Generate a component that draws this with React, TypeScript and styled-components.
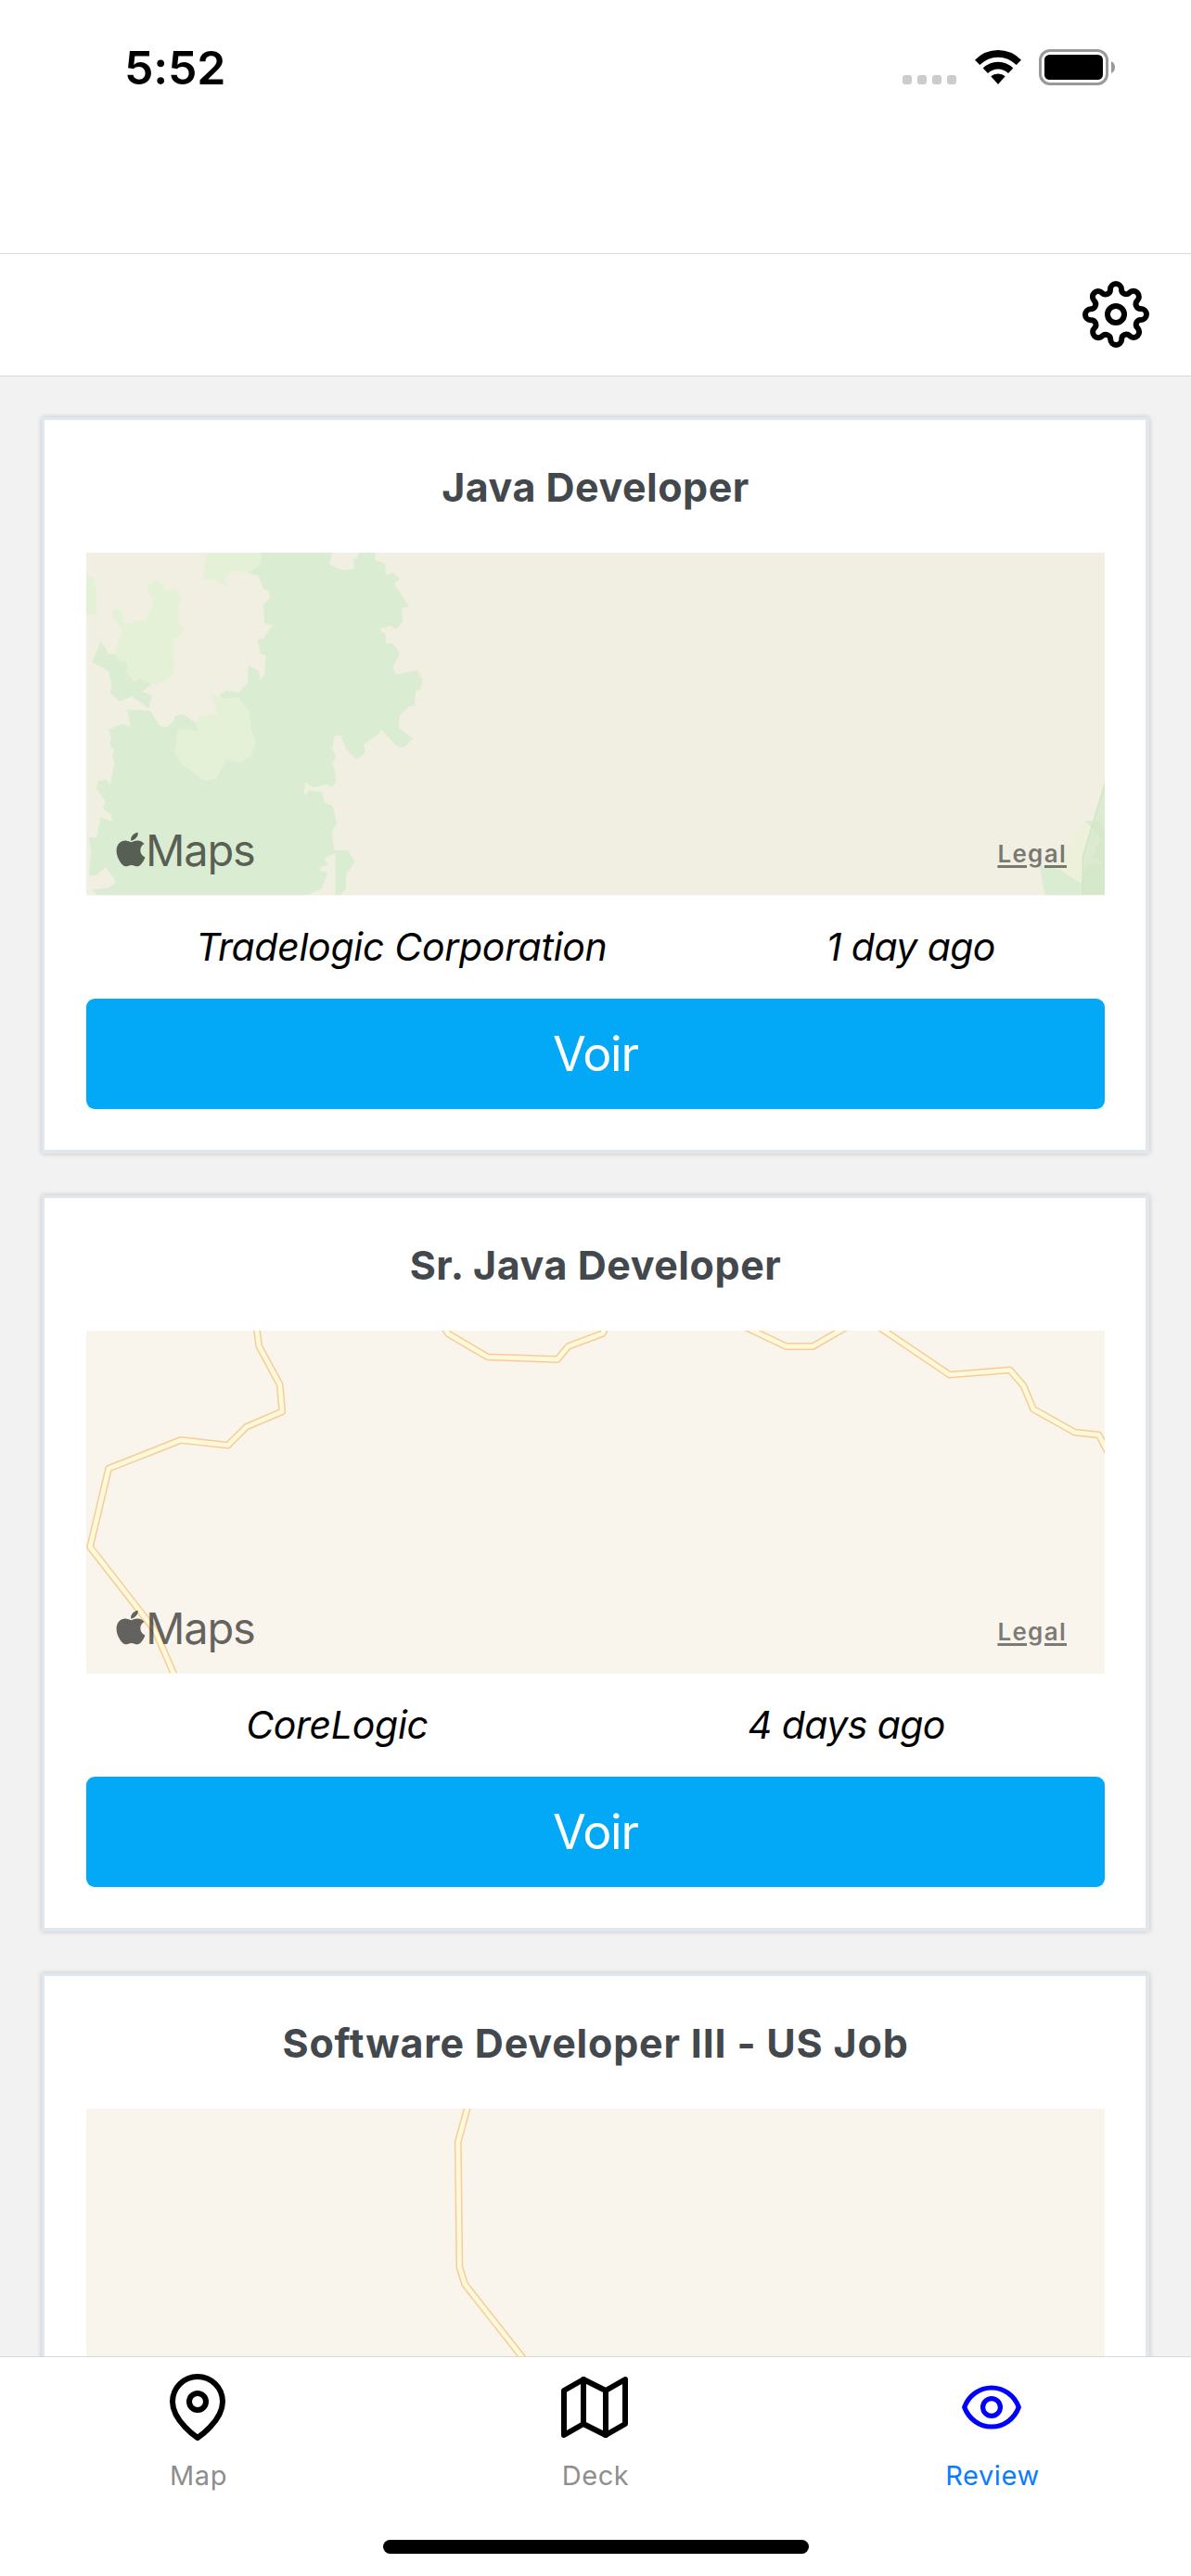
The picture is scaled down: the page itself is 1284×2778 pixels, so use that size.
import React from 'react';
import styled, { createGlobalStyle } from 'styled-components';
import { FiMap, FiMapPin, FiSettings } from 'react-icons/fi';
import { FaApple } from 'react-icons/fa';

const GlobalStyle = createGlobalStyle`
  * { box-sizing: border-box; }
  body {
    margin: 0;
    background: #fff;
    font-family: Inter, "Liberation Sans", sans-serif;
    -webkit-font-smoothing: antialiased;
  }
`;

const Screen = styled.div`
  width: 1284px;
  height: 2778px;
  display: flex;
  flex-direction: column;
  overflow: hidden;
  background: #fff;
`;

const StatusBar = styled.header`
  flex: none;
  height: 273px;
  display: flex;
  justify-content: space-between;
  align-items: flex-start;
  padding: 43px 82px 0 134px;
`;

const Time = styled.span`
  font-size: 50px;
  line-height: 60px;
  font-weight: 600;
  letter-spacing: -0.2px;
`;

const StatusIcons = styled.div`
  display: flex;
  padding-top: 10px;
`;

const Dots = styled.div`
  display: flex;
  gap: 6px;
  margin: 28px 20px 0 0;
`;

const Dot = styled.i`
  width: 10px;
  height: 10px;
  border-radius: 3px;
  background: #ccc;
`;

const Wifi = styled.svg`
  width: 50px;
  height: 38px;
  margin: 1px 19px 0 0;
`;

const Battery = styled.svg`
  width: 82px;
  height: 39px;
`;

const Header = styled.div`
  flex: none;
  height: 133px;
  border-top: 1px solid #d9d9db;
  border-bottom: 1px solid #d9d9db;
  display: flex;
  justify-content: flex-end;
  padding: 29px 45px 0 0;
`;

const List = styled.main`
  flex: 1;
  min-height: 0;
  overflow: hidden;
  display: flex;
  flex-direction: column;
  gap: 45px;
  padding: 44px 45px 0;
  background: #f2f2f2;
`;

const Card = styled.article`
  flex: none;
  height: 794px;
  display: flex;
  flex-direction: column;
  padding: 42px 44px 0 45px;
  background: #fff;
  border: solid #e1e8ed;
  border-width: 3px 4px 4px 3px;
  box-shadow: 0 0 6px rgba(0, 0, 0, 0.2);
`;

const Title = styled.h2<{ $spacing: number }>`
  margin: 0 0 41px;
  font-size: 43px;
  line-height: 60px;
  font-weight: 700;
  text-align: center;
  color: #43484d;
  letter-spacing: ${(p) => p.$spacing}px;
`;

const MapFrame = styled.div<{ $bg: string; $edge: string }>`
  position: relative;
  flex: none;
  height: 370px;
  background: ${(p) => p.$bg};
  border-bottom: 1px solid ${(p) => p.$edge};
`;

const MapArt = styled.svg`
  display: block;
  width: 1098px;
  height: 369px;
`;

const MapsBrand = styled.div`
  position: absolute;
  left: 32px;
  top: 296px;
  display: flex;
  align-items: flex-start;
  color: rgba(0, 0, 0, 0.6);
  font-size: 47px;
  line-height: 50px;
  letter-spacing: -1.2px;

  svg {
    width: 32px;
    height: 42px;
    margin: 3px 0 0 0;
  }
`;

const Legal = styled.a`
  position: absolute;
  right: 41px;
  top: 310px;
  font-size: 26px;
  line-height: 30px;
  font-weight: 600;
  letter-spacing: 1.3px;
  color: rgba(0, 0, 0, 0.5);
  text-decoration: underline;
  text-decoration-thickness: 3px;
  text-underline-offset: 3px;
`;

const Details = styled.div`
  flex: none;
  height: 111px;
  display: flex;
  justify-content: space-around;
  font-size: 41px;
  line-height: 111px;
  font-style: italic;
`;

const Company = styled.span`
  letter-spacing: -0.3px;
`;

const Age = styled.span`
  letter-spacing: -0.6px;
`;

const ViewButton = styled.button`
  flex: none;
  height: 119px;
  border: 0;
  padding: 0;
  border-radius: 9px;
  background: #03a9f6;
  color: #fff;
  font: 400 52px/119px Inter, sans-serif;
  letter-spacing: -1.2px;
`;

const TabBar = styled.nav`
  flex: none;
  height: 237px;
  border-top: 1px solid #d8d8d8;
  display: flex;
  flex-direction: column;
  align-items: center;
  background: #fff;
`;

const Tabs = styled.div`
  width: 100%;
  height: 197px;
  display: flex;
`;

const Tab = styled.div<{ $color: string }>`
  flex: 1;
  display: flex;
  flex-direction: column;
  align-items: center;
  padding: 18px 0 0;
  gap: 18px;
  color: ${(p) => p.$color};
  font-size: 29px;
  line-height: 40px;
  letter-spacing: 0.6px;

  svg {
    margin-right: 2px;
  }
`;

const HomeIndicator = styled.div`
  width: 459px;
  height: 15px;
  border-radius: 8px;
  background: #000;
`;

function EyeIcon() {
  return (
    <svg width="72" height="72" viewBox="-36 -36 72 72" fill="none" stroke="#0000ff" strokeWidth="5.2" strokeLinejoin="round">
      <path d="M-29.3 0C-24.5-12.8-13-21 0-21S24.5-12.8 29.3 0C24.5 12.8 13 21 0 21S-24.5 12.8-29.3 0Z" />
      <circle r="9.4" />
    </svg>
  );
}

function ForestMap() {
  return (
    <MapArt viewBox="0 0 1098 369">
      <g transform="translate(-93 -176) scale(.38265 .35714)">
        <path
          fill="#daecd1"
          d="M736 490H936L929 528L966 546L997 543V515L1010 504V490H1058L1056 514L1086 527V561L1108 554L1127 572L1110 587L1154 656L1132 661L1135 702L1114 725L1102 713L1069 723L1088 742L1087 767H1107L1127 796L1106 839L1116 860L1175 848L1191 877L1185 906L1171 910L1168 954L1152 957L1125 987V1023L1163 1054L1140 1080H1121L1074 1027L1066 1042L1026 1069L1028 1098L1005 1118L976 1088L960 1045H942L936 1085L946 1107L936 1132L944 1150L946 1187L934 1202L922 1192L882 1202L860 1186L856 1228L869 1211L908 1215L914 1246L937 1258L949 1310L936 1333L941 1391L982 1392L1000 1427L975 1464V1507L960 1526H945V1401L912 1416L924 1436L901 1443V1453L924 1459L906 1507L868 1526H274L260 1511L307 1504L327 1487L298 1441L272 1467H251L256 1396L250 1354L273 1352L283 1291L316 1305L313 1285L289 1266L297 1243L271 1205L277 1181L299 1178L310 1194L323 1123L316 1106L322 1090L310 1074L313 1047L305 1026L346 1010L367 1021L359 967L424 971L450 1016L469 1021L493 997L491 988L515 980L552 1007L560 1020L630 1000L620 920L637 909L673 915L698 884L700 834L730 850L733 879L746 861L748 803L733 797L726 754L742 752L767 711L746 707L741 652L760 630L757 608L742 602L728 563L697 553Z"
        />
        <path
          fill="#daecd1"
          d="M284 760L307 799L330 800L425 892L401 913L428 923L419 963L371 926L339 943L310 915L315 897L307 851L260 823Z"
        />
        <path
          fill="#e4f1d7"
          d="M585 490H736V515Q732 542 697 553L651 546L632 573L648 602L608 574H571ZM243 563L265 569L271 600V682L243 678ZM416 585L438 576L462 590L464 605L497 601L508 633L501 660V702L515 723L512 740L484 757L490 825L488 864L444 889L423 890L395 873L378 882L355 854L362 822H336L323 797L343 729L316 681L317 664L333 662L346 676L352 708L410 696L434 645L416 605ZM596 917L634 934L671 929L701 971L708 1029L720 1061L709 1106L679 1127L638 1119L609 1175L575 1181L515 1133L491 1098L501 1024L556 1031L553 1004L562 988L612 980Z"
        />
      </g>
      <g transform="translate(707 -176) scale(.33333 .35714)">
        <path fill="#daecd1" d="M962 1436L979 1526H1173V1320L1148 1302H1109L1131 1324L1095 1490L1030 1450Z" />
        <path fill="#eef1da" d="M1106 1303L1129 1324L1102 1410V1468L1095 1490L1020 1446L1044 1380L1070 1384L1073 1348Z" />
        <path fill="#dceacf" d="M1173 1190V1526H1101V1411Z" />
        <path fill="#d5e8ca" d="M1147 1300L1173 1325V1526H1102V1468L1117 1432L1160 1438L1163 1424L1139 1414L1142 1390L1160 1358L1130 1325Z" />
        <path fill="none" stroke="#d0e4c6" strokeWidth="4" d="M1173 1192L1102 1411V1526" />
      </g>
    </MapArt>
  );
}

function Road({ d }: { d: string }) {
  return (
    <>
      <path d={d} fill="none" stroke="#f6cc9a" strokeWidth="7.8" vectorEffect="non-scaling-stroke" strokeLinejoin="round" />
      <path d={d} fill="none" stroke="#fdf9d9" strokeWidth="4.8" vectorEffect="non-scaling-stroke" strokeLinejoin="round" />
    </>
  );
}

function CoastRoadsMap() {
  return (
    <MapArt viewBox="0 0 1098 369">
      <g transform="translate(-93 -15) scale(.40943 .33333)">
        <Road d="M675 30L682 95L737 220L743 307L649 356L600 416L476 399L286 491L237 745L408 1015L461 1165" />
        <Road d="M1170 35L1180 55L1284 130L1468 138L1496 96L1587 54L1596 30" />
      </g>
      <g transform="translate(549 -15) scale(.40943 .33333)">
        <Road d="M380 25L502 96H572L680 20" />
        <Road d="M730 20L933 188L1091 172L1127 223L1153 299L1262 374L1325 382L1350 440" />
      </g>
    </MapArt>
  );
}

function SingleRoadMap() {
  return (
    <MapArt viewBox="0 0 1098 369">
      <g transform="translate(-93 -14) scale(.81888 .33333)">
        <Road d="M617 25L603 150L605 555L612 610L692 860L760 1120" />
      </g>
    </MapArt>
  );
}

const jobs = [
  { title: 'Java Developer', company: 'Tradelogic Corporation', age: '1 day ago', bg: '#f1efe2', edge: '#f8f7f0', spacing: 0.5, art: <ForestMap /> },
  { title: 'Sr. Java Developer', company: 'CoreLogic', age: '4 days ago', bg: '#f9f4ec', edge: '#f9f4ec', spacing: 0.55, art: <CoastRoadsMap /> },
  { title: 'Software Developer III - US Job', company: '', age: '', bg: '#f9f4ec', edge: '#f9f4ec', spacing: 0.8, art: <SingleRoadMap /> },
];

export default function App() {
  return (
    <Screen>
      <GlobalStyle />
      <StatusBar>
        <Time>5:52</Time>
        <StatusIcons>
          <Dots>
            <Dot />
            <Dot />
            <Dot />
            <Dot />
          </Dots>
          <Wifi viewBox="0 0 50 38">
            <path d="M0 10.7Q10.500 0 25 0T50 10.700L44.700 16Q36 7.800 25 7.800T5.300 16Z" />
            <path d="M8.700 19.500Q15.500 12.700 25 12.700T41.300 19.500L36 25Q31.300 20.500 25 20.500T14 25Z" />
            <path d="M17.300 28.300Q20.500 25.500 25 25.500T32.700 28.300L25 37Z" />
          </Wifi>
          <Battery viewBox="0 0 82 39">
            <rect x="1.500" y="1.500" width="72" height="36" rx="10.500" fill="none" stroke="#999" strokeWidth="3" />
            <rect x="6" y="6" width="63" height="27" rx="5.500" />
            <path d="M78 13Q82 15 82 19.500T78 26Z" fill="#999" />
          </Battery>
        </StatusIcons>
      </StatusBar>
      <Header>
        <FiSettings size={72} />
      </Header>
      <List>
        {jobs.map((job) => (
          <Card key={job.title}>
            <Title $spacing={job.spacing}>{job.title}</Title>
            <MapFrame $bg={job.bg} $edge={job.edge}>
              {job.art}
              {job.company && (
                <>
                  <MapsBrand>
                    <FaApple />
                    Maps
                  </MapsBrand>
                  <Legal>Legal</Legal>
                </>
              )}
            </MapFrame>
            {job.company && (
              <>
                <Details>
                  <Company>{job.company}</Company>
                  <Age>{job.age}</Age>
                </Details>
                <ViewButton>Voir</ViewButton>
              </>
            )}
          </Card>
        ))}
      </List>
      <TabBar>
        <Tabs>
          <Tab $color="#8e8e8f">
            <FiMapPin size={72} color="#000" />
            <span>Map</span>
          </Tab>
          <Tab $color="#8e8e8f">
            <FiMap size={72} color="#000" />
            <span>Deck</span>
          </Tab>
          <Tab $color="#0a7cff">
            <EyeIcon />
            <span>Review</span>
          </Tab>
        </Tabs>
        <HomeIndicator />
      </TabBar>
    </Screen>
  );
}
